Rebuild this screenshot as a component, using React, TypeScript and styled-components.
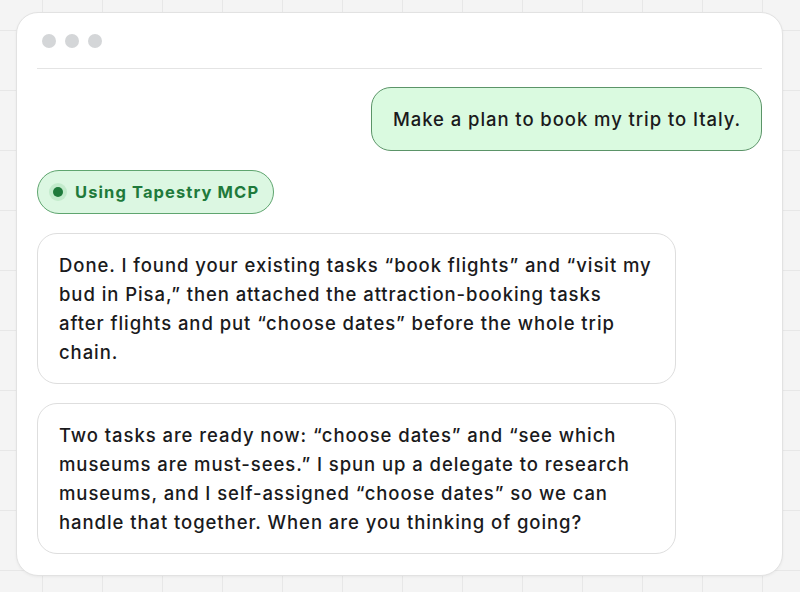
import * as React from 'react';
import styled, { createGlobalStyle } from 'styled-components';

const GlobalStyle = createGlobalStyle`
  html, body {
    margin: 0;
    padding: 0;
  }
  body {
    width: 800px;
    height: 592px;
    overflow: hidden;
    font-family: Inter, "Noto Sans", sans-serif;
    background-color: #f4f4f4;
    background-image:
      linear-gradient(to right, #e7e7e7 1px, transparent 1px),
      linear-gradient(to bottom, #e7e7e7 1px, transparent 1px);
    background-size: 60px 60px;
    background-position: 42px 30px;
  }
`;

const Page = styled.div`
  padding: 12px 17px 0 16px;
`;

const Window = styled.main`
  box-sizing: border-box;
  padding: 0 20px 21px;
  background: #ffffff;
  border: 1px solid #e2e2e2;
  border-radius: 22px;
  box-shadow: 0 1px 3px #0000000d;
  display: flex;
  flex-direction: column;
`;

const TitleBar = styled.header`
  flex-shrink: 0;
  height: 55px;
  display: flex;
  align-items: center;
  gap: 9px;
  padding-left: 5px;
  border-bottom: 1px solid #e4e4e4;
`;

const Dot = styled.span`
  width: 14px;
  height: 14px;
  border-radius: 50%;
  background: #d4d6d8;
`;

const Thread = styled.section`
  display: flex;
  flex-direction: column;
  align-items: flex-start;
  gap: 19px;
  padding-top: 18px;
`;

// user messages hug their text; assistant replies get a fixed column width
const Bubble = styled.div<{ $mine?: boolean }>`
  box-sizing: border-box;
  padding: 17px ${(p) => (p.$mine ? '20px' : '23px')} 16px 21px;
  border-radius: 20px;
  font-size: 18.5px;
  line-height: 29px;
  font-weight: 500;
  letter-spacing: 0.93px;
  color: #1a1a1c;
  background: ${(p) => (p.$mine ? '#dafae0' : '#ffffff')};
  border: 1px solid ${(p) => (p.$mine ? '#5b9468' : '#dedede')};
  align-self: ${(p) => (p.$mine ? 'flex-end' : 'flex-start')};
  width: ${(p) => (p.$mine ? 'auto' : '639px')};
`;

const ToolBadge = styled.div`
  height: 44px;
  box-sizing: border-box;
  display: inline-flex;
  align-items: center;
  gap: 12px;
  padding: 0 14px 0 15px;
  border-radius: 22px;
  background: #dcf7e2;
  border: 1px solid #5fa56f;
  color: #1f7a3b;
  font-size: 16.5px;
  font-weight: 700;
  letter-spacing: 1.1px;
`;

const StatusDot = styled.span`
  width: 10px;
  height: 10px;
  border-radius: 50%;
  background: #1f7a3b;
  box-shadow: 0 0 0 4px #c3ebcc;
`;

export default function App() {
  return (
    <>
      <GlobalStyle />
      <Page>
        <Window>
          <TitleBar>
            <Dot />
            <Dot />
            <Dot />
          </TitleBar>
          <Thread>
            <Bubble $mine>Make a plan to book my trip to Italy.</Bubble>
            <ToolBadge>
              <StatusDot />
              Using Tapestry MCP
            </ToolBadge>
            <Bubble>
              Done. I found your existing tasks “book flights” and “visit my bud
              in Pisa,” then attached the attraction-booking tasks after flights
              and put “choose dates” before the whole trip chain.
            </Bubble>
            <Bubble>
              Two tasks are ready now: “choose dates” and “see which museums are
              must-sees.” I spun up a delegate to research museums, and I
              self-assigned “choose dates” so we can handle that together. When
              are you thinking of going?
            </Bubble>
          </Thread>
        </Window>
      </Page>
    </>
  );
}
